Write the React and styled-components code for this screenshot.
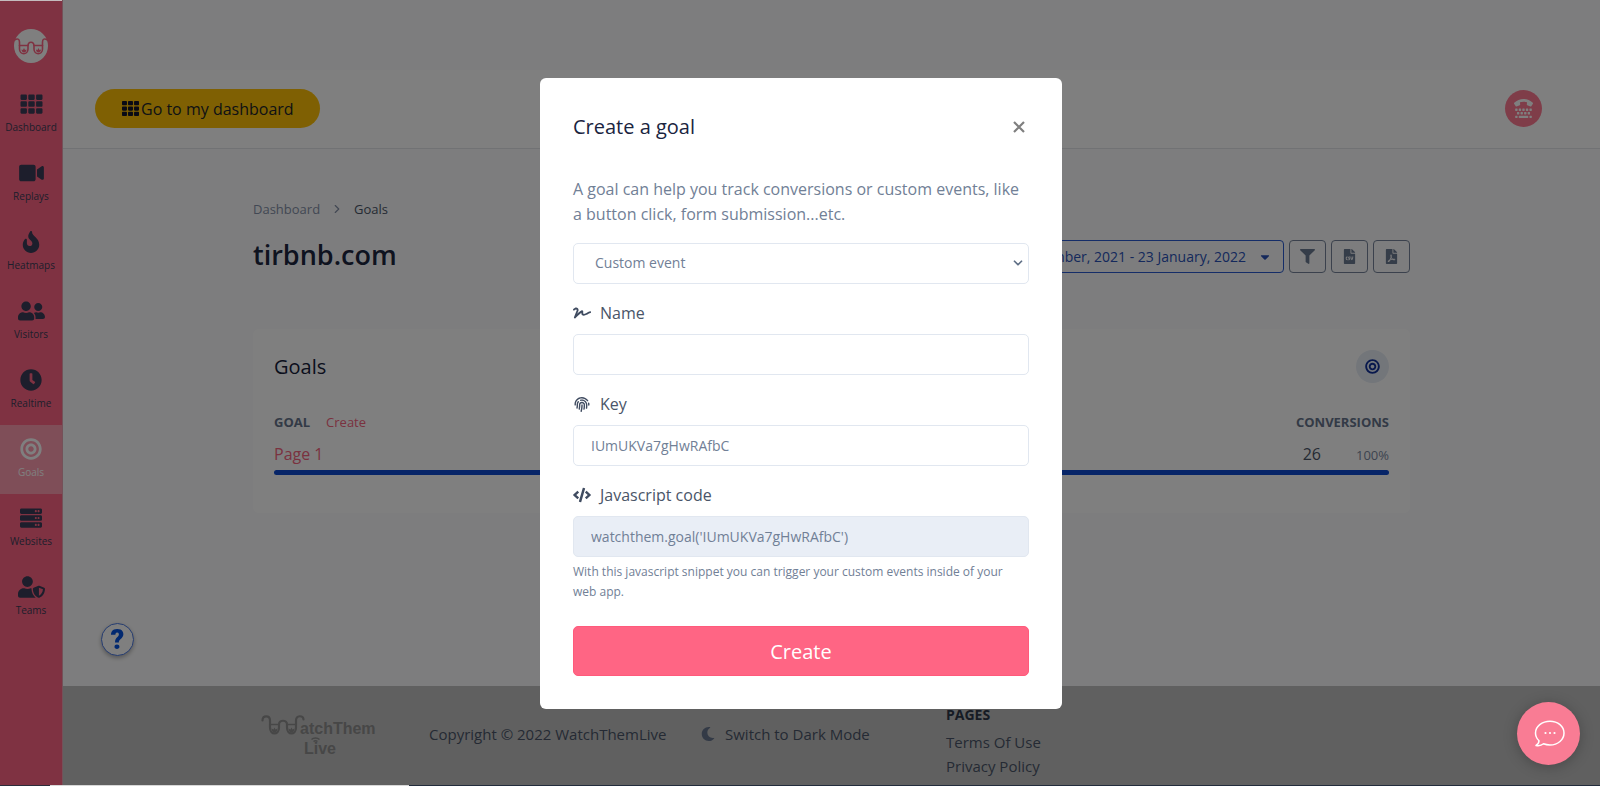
import React, { useState } from 'react'
import styled, { createGlobalStyle } from 'styled-components'
import {
    FaTh, FaVideo, FaFire, FaUserFriends, FaClock, FaBullseye, FaServer, FaUserShield,
    FaTty, FaFilter, FaFileCsv, FaFilePdf, FaCaretDown, FaSignature, FaFingerprint, FaCode, FaMoon
} from 'react-icons/fa'
import { FiChevronRight, FiChevronDown } from 'react-icons/fi'

const GlobalStyle = createGlobalStyle`
    * {
        box-sizing: border-box;
    }

    body {
        margin: 0;
        background: #fbfbfc;
        color: #4a5568;
        font-family: "Open Sans", "Noto Sans", sans-serif;
        font-size: 16px;
        line-height: 24px;
    }

    a {
        color: inherit;
        text-decoration: none;
    }

    button, input, select {
        font: inherit;
    }

    button {
        cursor: pointer;
    }
`

const Page = styled.div`
    display: flex;
    height: 100vh;
    overflow: hidden;
`

const Sidebar = styled.nav`
    flex: none;
    display: flex;
    flex-direction: column;
    align-items: stretch;
    width: 63px;
    padding-top: 29px;
    background: #ff6584;
    border-right: 1px solid #e8a3b2;
`

const Brand = styled.a`
    display: flex;
    justify-content: center;
    height: 51px;
`

const NavItem = styled.a`
    display: flex;
    flex-direction: column;
    align-items: center;
    gap: 4px;
    height: 69px;
    padding-top: 13px;
    background: ${props => props.$active ? 'rgba(255, 255, 255, 0.36)' : 'transparent'};
    color: ${props => props.$active ? '#fff' : '#3b3d58'};
    font-size: 10px;
    line-height: 16px;

    svg {
        height: 22px;
    }
`

const Content = styled.div`
    flex: 1;
    min-width: 0;
    display: flex;
    flex-direction: column;
`

const TopBar = styled.header`
    flex: none;
    display: flex;
    align-items: center;
    justify-content: space-between;
    margin-top: 70px;
    padding: 19px 58px 20px 32px;
    background: #fff;
    border-bottom: 1px solid #e2e4e8;
`

const DashboardButton = styled.button`
    display: flex;
    align-items: center;
    gap: 2px;
    height: 39px;
    padding: 0 26px 0 27px;
    border: none;
    border-radius: 20px;
    background: #ffc107;
    color: #212529;

    svg {
        color: #12152a;
    }
`

const SupportButton = styled.button`
    display: flex;
    align-items: center;
    justify-content: center;
    width: 37px;
    height: 37px;
    padding: 0;
    border: none;
    border-radius: 50%;
    background: #ff7a93;
    color: #fff;
`

const Main = styled.main`
    flex: 1;
    width: 100%;
    max-width: 1157px;
    margin: 0 auto;
    padding-top: 48px;
`

const Breadcrumb = styled.div`
    display: flex;
    align-items: center;
    gap: 10px;
    font-size: 13px;
    color: #8590a8;

    span {
        color: #4a5568;
    }
`

const TitleRow = styled.div`
    display: flex;
    align-items: flex-start;
    justify-content: space-between;
    padding: 19px 0 56px;
`

const PageTitle = styled.h1`
    margin: 0;
    font-size: 27px;
    line-height: 30px;
    font-weight: 600;
    color: #1c2740;
`

const Tools = styled.div`
    display: flex;
    gap: 5px;
`

const ToolButton = styled.button`
    display: flex;
    align-items: center;
    justify-content: center;
    gap: 12px;
    min-width: 37px;
    height: 33px;
    padding: ${props => props.$primary ? '0 11px' : '0'};
    border: 1px solid ${props => props.$primary ? '#2a5bd0' : '#76839a'};
    border-radius: 4px;
    background: transparent;
    color: ${props => props.$primary ? '#2a52b8' : '#6b7a92'};
    font-size: 14px;
`

const Card = styled.section`
    padding: 21px 21px 38px;
    border-radius: 6px;
    background: #fff;
`

const CardHead = styled.div`
    display: flex;
    align-items: center;
    justify-content: space-between;
    margin-bottom: 27px;
`

const CardTitle = styled.h2`
    margin: 0;
    font-size: 20px;
    font-weight: 400;
    color: #16203a;
`

const RoundIcon = styled.span`
    display: flex;
    align-items: center;
    justify-content: center;
    width: 33px;
    height: 33px;
    border-radius: 50%;
    background: #e6ecf5;
    color: #10309a;
`

const GoalTable = styled.table`
    width: 100%;
    border-collapse: collapse;

    th, td {
        padding: 0;
        text-align: left;
    }

    th:last-child, td:last-child {
        text-align: right;
    }

    th {
        height: 24px;
        font-size: 13px;
        color: #66748c;
    }

    td {
        height: 36px;
        padding-top: 4px;
    }
`

const CreateLink = styled.a`
    margin-left: 16px;
    font-weight: 400;
    font-size: 13px;
    color: #f5647f;
`

const GoalLink = styled.a`
    color: #f5647f;
`

const Share = styled.small`
    margin-left: 35px;
    font-size: 13px;
    color: #7b88a0;
`

const Bar = styled.div`
    height: 5px;
    border-radius: 3px;
    background: #0f4ad0;
`

const HelpButton = styled.button`
    position: fixed;
    left: 101px;
    bottom: 130px;
    width: 33px;
    height: 33px;
    padding: 0;
    border: 1px solid #4a78e0;
    border-radius: 50%;
    background: #fff;
    box-shadow: 0 2px 4px rgba(0, 0, 0, 0.3);
    color: #0552e0;
    font-family: Roboto, sans-serif;
    font-size: 27px;
    font-weight: 900;
`

const FooterBar = styled.footer`
    flex: none;
    height: 100px;
    background: #c1c1c1;
`

const FooterInner = styled.div`
    display: grid;
    grid-template-columns: 168px 272px 245px 1fr;
    max-width: 1157px;
    margin: 0 auto;
    padding: 17px 8px 0;
    font-size: 15px;

    > * {
        margin-top: 19px;
    }

    > svg {
        margin-top: 12px;
    }
`

const ModeLink = styled.a`
    display: flex;
    align-items: center;
    gap: 10px;
    height: 24px;

    svg {
        color: #66748c;
    }
`

const PagesList = styled.div`
    && {
        margin-top: 0;
    }

    a {
        display: block;
    }
`

const PagesTitle = styled.h3`
    margin: 0 0 3px;
    font-size: 14px;
    font-weight: 700;
    line-height: 24px;
    color: #2d3748;
`

const Overlay = styled.div`
    position: fixed;
    inset: 0;
    display: flex;
    align-items: center;
    justify-content: center;
    padding-left: 2px;
    background: rgba(0, 0, 0, 0.5);
`

const Modal = styled.form`
    width: 522px;
    max-width: 100%;
    padding: 33px;
    border-radius: 6px;
    background: #fff;
`

const ModalHead = styled.div`
    display: flex;
    align-items: center;
    justify-content: space-between;
    height: 33px;
    margin-bottom: 33px;
`

const ModalTitle = styled.h2`
    margin: 0;
    font-size: 20px;
    font-weight: 500;
    color: #1a2440;
`

const CloseButton = styled.button`
    display: flex;
    padding: 4px;
    border: none;
    background: none;
    color: #7f7f7f;
`

const Lead = styled.p`
    margin: 0 0 16px;
    line-height: 25px;
    font-size: 16px;
    color: #718096;
`

const Field = styled.div`
    margin-top: 17px;
`

const Label = styled.label`
    display: flex;
    align-items: center;
    gap: 9px;
    margin-bottom: 8px;
    font-size: 16px;
    line-height: 25px;

    svg {
        width: 18px;
        color: #3f4b60;
    }
`

const Input = styled.input`
    display: block;
    width: 100%;
    height: 41px;
    padding: 0 17px;
    border: 1px solid #e1e7f0;
    border-radius: 5px;
    background: ${props => props.readOnly ? '#e9eef6' : '#fff'};
    color: #718096;
    font-size: 14px;
`

const SelectBox = styled.div`
    display: grid;
    align-items: center;

    > * {
        grid-area: 1 / 1;
    }

    svg {
        justify-self: end;
        margin-right: 4px;
        pointer-events: none;
        color: #5f6f86;
    }
`

const Select = styled.select`
    width: 100%;
    height: 41px;
    padding: 0 21px;
    border: 1px solid #e1e7f0;
    border-radius: 5px;
    background: #fff;
    color: #718096;
    font-size: 14px;
    appearance: none;
`

const Hint = styled.p`
    margin: 5px 0 24px;
    font-size: 12px;
    line-height: 20px;
    color: #718096;
`

const SubmitButton = styled.button`
    display: block;
    width: 100%;
    height: 50px;
    padding: 2px 0 0;
    border: 1px solid #ff5a7b;
    border-radius: 5px;
    background: #ff6584;
    color: #fff;
    font-size: 20px;
`

const ChatButton = styled.button`
    position: fixed;
    right: 20px;
    bottom: 21px;
    display: flex;
    align-items: center;
    justify-content: center;
    width: 63px;
    height: 63px;
    padding: 0;
    border: none;
    border-radius: 50%;
    background: #f97c94;
    box-shadow: 0 2px 14px rgba(0, 0, 0, 0.25);
`

// thin slivers of the browser window at the edges of the page
const TopEdge = styled.div`
    position: fixed;
    top: 0;
    left: 0;
    width: 62px;
    height: 1px;
    background: #c4bcbe;
`

const BottomEdge = styled.div`
    position: fixed;
    inset: auto 0 0 0;
    height: 1px;
    background: linear-gradient(to right, #2c2c3a 50px, #d8d8d8 50px, #d8d8d8 409px, #222c3c 409px);
`

const navItems = [
    { label: 'Dashboard', icon: FaTh, size: 23 },
    { label: 'Replays', icon: FaVideo, size: 25 },
    { label: 'Heatmaps', icon: FaFire, size: 22 },
    { label: 'Visitors', icon: FaUserFriends, size: 27 },
    { label: 'Realtime', icon: FaClock, size: 22 },
    { label: 'Goals', icon: FaBullseye, size: 22, active: true },
    { label: 'Websites', icon: FaServer, size: 22 },
    { label: 'Teams', icon: FaUserShield, size: 27 }
]

const BrandMark = () => (
    <svg width="34" height="34" viewBox="0 0 34 34" fill="none" aria-hidden="true">
        <circle cx="17" cy="17" r="17" fill="#fff" />
        <g stroke="#ff6584" strokeWidth="1.6" strokeLinecap="round">
            <path d="M.5 11c3-2 5-1 5 2v7c0 6.300 8.500 6.300 8.500 0v-3c0-5 6-5 6 0v3c0 6.300 8.500 6.300 8.500 0v-7c0-3 2-4 5-2" />
            <path d="M5.500 16.500H14M20 16.500h8.500" />
        </g>
        <path d="M7.500 20.500l1.500.500 1-2 1 2 1.500-.500c0 4-5 4-5 0zM22 20.500l1.500.500 1-2 1 2 1.500-.500c0 4-5 4-5 0z" fill="#ff6584" />
    </svg>
)

const FooterLogo = () => (
    <svg width="118" height="44" viewBox="0 0 118 44" fill="none" role="img" aria-label="WatchThem Live">
        <g stroke="#8e8e8e" strokeWidth="2.200" strokeLinecap="round">
            <path d="M1.500 5.500c0-5.500 7.500-5.500 7.500 0v7c0 8 9 8 9 0v-3c0-5 8-5 8 0v3c0 8 9 8 9 0v-7c0-5.500 7.500-5.500 7.500-1" />
            <path d="M9 9.500h9M26 9.500h9" strokeWidth="1.600" />
        </g>
        <path d="M10.500 13.500l2 1 1-2 1 2 2-1c0 5.500-6 5.500-6 0zM27.500 13.500l2 1 1-2 1 2 2-1c0 5.500-6 5.500-6 0z" fill="#8e8e8e" />
        <g fill="#8e8e8e" fontFamily="Liberation Sans, sans-serif" fontWeight="700" fontSize="16">
            <text x="39" y="19">atchThem</text>
            <text x="43" y="39">Live</text>
        </g>
        <path d="M50.500 24.500c2-2 6-2 8 0M52.500 26.500c1.200-1 2.800-1 4 0" stroke="#8e8e8e" strokeWidth="1.500" />
    </svg>
)

const ChatIcon = () => (
    <svg width="32" height="28" viewBox="0 0 32 28" fill="none" aria-hidden="true">
        <path d="M17 1.200C9 1.200 2.500 6.500 2.500 13c0 3 1.300 5.700 3.500 7.800 0 2-1.200 3.600-3 4.700 2.700.6 5.400.1 7.500-1.700 2 .8 4.200 1.200 6.500 1.200 8 0 14-5.400 14-12S25 1.200 17 1.200z" stroke="#fff" strokeWidth="1.500" strokeLinejoin="round" />
        <g fill="#fff">
            <circle cx="12.500" cy="13" r="1.100" />
            <circle cx="17" cy="13" r="1.100" />
            <circle cx="21.500" cy="13" r="1.100" />
        </g>
    </svg>
)

const CloseIcon = () => (
    <svg width="12" height="12" viewBox="0 0 12 12" aria-hidden="true">
        <path d="M1 1l10 10M11 1L1 11" stroke="currentColor" strokeWidth="2.200" />
    </svg>
)

const GoalModal = () => {
    const [name, setName] = useState('')
    const [key, setKey] = useState('IUmUKVa7gHwRAfbC')

    return (
        <Overlay>
            <Modal role="dialog" aria-labelledby="modal-title" onSubmit={e => e.preventDefault()}>
                <ModalHead>
                    <ModalTitle id="modal-title">Create a goal</ModalTitle>
                    <CloseButton type="button" aria-label="Close"><CloseIcon /></CloseButton>
                </ModalHead>
                <Lead>A goal can help you track conversions or custom events, like a button click, form submission...etc.</Lead>
                <SelectBox>
                    <Select aria-label="Goal type" defaultValue="event">
                        <option value="event">Custom event</option>
                    </Select>
                    <FiChevronDown size={14} strokeWidth={3} />
                </SelectBox>
                <Field>
                    <Label htmlFor="goal-name"><FaSignature size={18} />Name</Label>
                    <Input id="goal-name" value={name} onChange={e => setName(e.target.value)} />
                </Field>
                <Field>
                    <Label htmlFor="goal-key"><FaFingerprint size={15} />Key</Label>
                    <Input id="goal-key" value={key} onChange={e => setKey(e.target.value)} />
                </Field>
                <Field>
                    <Label htmlFor="goal-code"><FaCode size={18} />Javascript code</Label>
                    <Input id="goal-code" readOnly value={`watchthem.goal('${key}')`} />
                </Field>
                <Hint>With this javascript snippet you can trigger your custom events inside of your web app.</Hint>
                <SubmitButton type="submit">Create</SubmitButton>
            </Modal>
        </Overlay>
    )
}

const App = () => (
    <>
        <GlobalStyle />
        <Page>
            <Sidebar>
                <Brand href="#" aria-label="Home"><BrandMark /></Brand>
                {navItems.map(({ label, icon: Icon, size, active }) => (
                    <NavItem key={label} href="#" $active={active}>
                        <Icon size={size} />
                        {label}
                    </NavItem>
                ))}
            </Sidebar>
            <Content>
                <TopBar>
                    <DashboardButton><FaTh size={17} />Go to my dashboard</DashboardButton>
                    <SupportButton aria-label="Support"><FaTty size={19} /></SupportButton>
                </TopBar>
                <Main>
                    <Breadcrumb>
                        <a href="#">Dashboard</a>
                        <FiChevronRight size={14} />
                        <span>Goals</span>
                    </Breadcrumb>
                    <TitleRow>
                        <PageTitle>tirbnb.com</PageTitle>
                        <Tools>
                            <ToolButton $primary>24 December, 2021 - 23 January, 2022<FaCaretDown size={14} /></ToolButton>
                            <ToolButton aria-label="Filter"><FaFilter size={15} /></ToolButton>
                            <ToolButton aria-label="Export CSV"><FaFileCsv size={15} /></ToolButton>
                            <ToolButton aria-label="Export PDF"><FaFilePdf size={15} /></ToolButton>
                        </Tools>
                    </TitleRow>
                    <Card>
                        <CardHead>
                            <CardTitle>Goals</CardTitle>
                            <RoundIcon><FaBullseye size={15} /></RoundIcon>
                        </CardHead>
                        <GoalTable>
                            <thead>
                                <tr>
                                    <th>GOAL<CreateLink href="#">Create</CreateLink></th>
                                    <th>CONVERSIONS</th>
                                </tr>
                            </thead>
                            <tbody>
                                <tr>
                                    <td><GoalLink href="#">Page 1</GoalLink></td>
                                    <td>26<Share>100%</Share></td>
                                </tr>
                            </tbody>
                        </GoalTable>
                        <Bar />
                    </Card>
                </Main>
                <FooterBar>
                    <FooterInner>
                        <FooterLogo />
                        <div>Copyright © 2022 WatchThemLive</div>
                        <ModeLink href="#"><FaMoon size={14} />Switch to Dark Mode</ModeLink>
                        <PagesList>
                            <PagesTitle>PAGES</PagesTitle>
                            <a href="#">Terms Of Use</a>
                            <a href="#">Privacy Policy</a>
                        </PagesList>
                    </FooterInner>
                </FooterBar>
            </Content>
        </Page>
        <HelpButton aria-label="Help">?</HelpButton>
        <GoalModal />
        <ChatButton aria-label="Chat"><ChatIcon /></ChatButton>
        <TopEdge />
        <BottomEdge />
    </>
)

export default App
